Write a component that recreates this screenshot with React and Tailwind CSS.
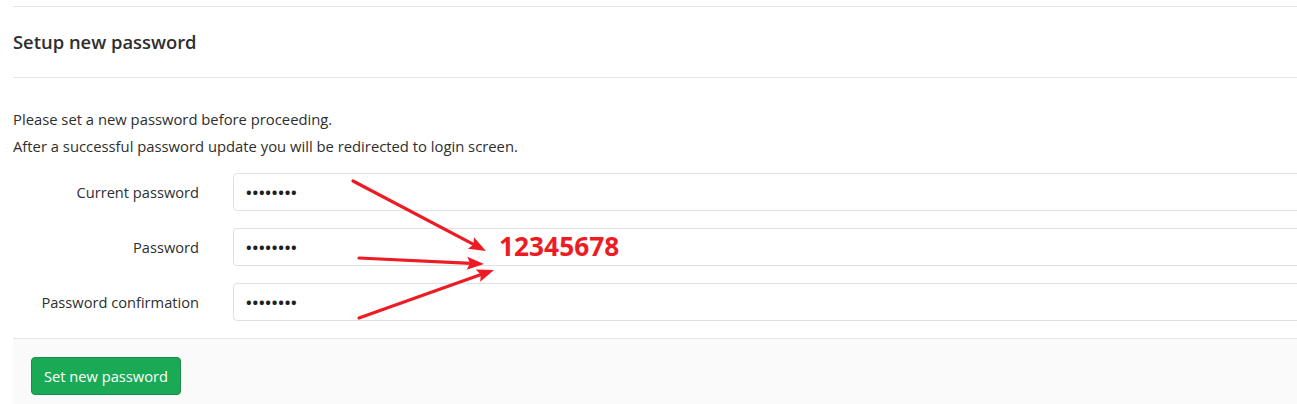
import React from "react";

function Arrow({ x1, y1, x2, y2 }) {
  const dx = x2 - x1;
  const dy = y2 - y1;
  const len = Math.sqrt(dx * dx + dy * dy);
  const ux = dx / len;
  const uy = dy / len;
  const hl = 17;
  const hw = 6.5;
  const bx = x2 - ux * hl;
  const by = y2 - uy * hl;
  const px = -uy;
  const py = ux;
  const pts = `${x2},${y2} ${bx + px * hw},${by + py * hw} ${bx + ux * 3},${by + uy * 3} ${bx - px * hw},${by - py * hw}`;
  return (
    <g>
      <line x1={x1} y1={y1} x2={bx + ux * 4} y2={by + uy * 4} stroke="#ed1c24" strokeWidth="3.2" strokeLinecap="round" />
      <polygon points={pts} fill="#ed1c24" />
    </g>
  );
}

function Row({ label }) {
  return (
    <div className="flex items-center mb-[17px]">
      <label className="w-[186px] text-right text-[14.65px] text-[#2e2e2e] whitespace-nowrap pt-[1px]">{label}</label>
      <div className="ml-[34px] flex-1 h-[38px] border border-[#e0e0e0] rounded-[4px] bg-white flex items-center pl-[12px]">
        <span className="text-[#1f1f1f] text-[15px] font-bold tracking-[0.8px] font-['Open_Sans',sans-serif]">••••••••</span>
      </div>
    </div>
  );
}

export default function App() {
  return (
    <div className="relative w-full h-[404px] overflow-hidden bg-white font-['Open_Sans',sans-serif] text-[#2e2e2e]">
      <div className="ml-[13px] w-[1300px] pt-[6px]">
        <div className="border-t border-[#e5e5e5] h-[71px] flex items-center">
          <h3 className="text-[18.4px] font-semibold text-[#2e2e2e] leading-none">Setup new password</h3>
        </div>
        <div className="border-t border-[#e5e5e5]">
          <div className="mt-[28px] text-[14.8px] leading-[27px]">
            <p>Please set a new password before proceeding.</p>
            <p>After a successful password update you will be redirected to login screen.</p>
          </div>
          <div className="mt-[13px]">
            <Row label="Current password" />
            <Row label="Password" />
            <Row label="Password confirmation" />
          </div>
        </div>
        <div className="border-t border-[#e5e5e5] bg-[#fafafa] h-[80px] pt-[18px] pl-[18px]">
          <button className="w-[150px] h-[38px] rounded-[4px] bg-[#1aaa55] border border-[#168f48] text-white text-[14.7px]">
            Set new password
          </button>
        </div>
      </div>

      <svg className="absolute inset-0 pointer-events-none" width="1297" height="404">
        <Arrow x1={353} y1={181} x2={486} y2={251} />
        <Arrow x1={359} y1={258} x2={484} y2={264} />
        <Arrow x1={359} y1={318} x2={494} y2={270} />
      </svg>
      <div className="absolute left-[499px] top-[230px] text-[26.3px] font-bold text-[#ed1c24] leading-[32px] font-['Open_Sans',sans-serif]">
        12345678
      </div>
    </div>
  );
}
